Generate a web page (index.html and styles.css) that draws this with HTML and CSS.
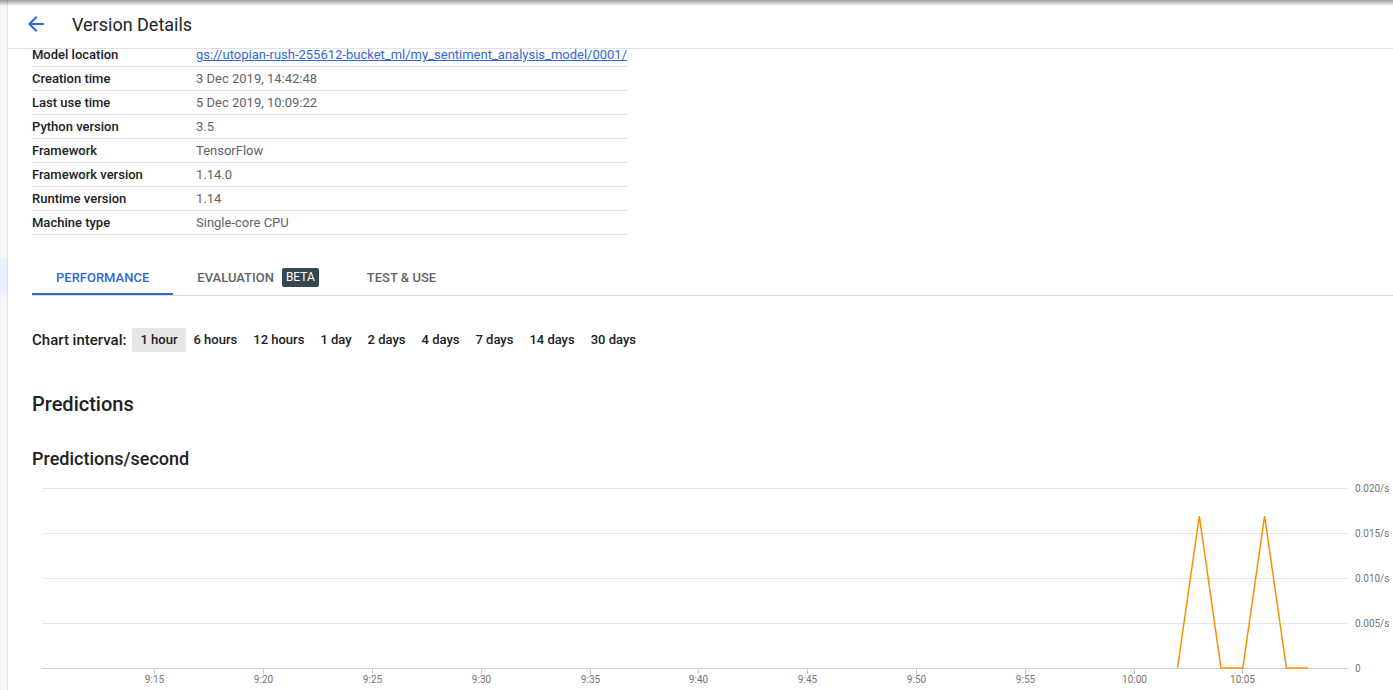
FILE: index.html
```html
<!DOCTYPE html>
<html lang="en">
<head>
<meta charset="utf-8">
<title>Version Details</title>
<link rel="stylesheet" href="styles.css">
</head>
<body>
<div class="top-shadow"></div>
<div class="app">
  <aside class="rail"><div class="rail-item"></div></aside>
  <main class="main">
    <header class="topbar">
      <button class="back" aria-label="Back">
        <svg width="24" height="24" viewBox="0 0 24 24"><path d="M20 11H7.83l5.59-5.59L12 4l-8 8 8 8 1.41-1.41L7.83 13H20v-2z" fill="#3367d6"/></svg>
      </button>
      <h1 class="title">Version Details</h1>
    </header>
    <div class="content">
      <div class="details">
        <div class="row"><span class="label">Model location</span><a class="value link" href="#">gs://utopian-rush-255612-bucket_ml/my_sentiment_analysis_model/0001/</a></div>
        <div class="row"><span class="label">Creation time</span><span class="value">3 Dec 2019, 14:42:48</span></div>
        <div class="row"><span class="label">Last use time</span><span class="value">5 Dec 2019, 10:09:22</span></div>
        <div class="row"><span class="label">Python version</span><span class="value">3.5</span></div>
        <div class="row"><span class="label">Framework</span><span class="value">TensorFlow</span></div>
        <div class="row"><span class="label">Framework version</span><span class="value">1.14.0</span></div>
        <div class="row"><span class="label">Runtime version</span><span class="value">1.14</span></div>
        <div class="row"><span class="label">Machine type</span><span class="value">Single-core CPU</span></div>
      </div>
      <nav class="tabs">
        <div class="tab active">Performance</div>
        <div class="tab">Evaluation<span class="badge">BETA</span></div>
        <div class="tab">Test &amp; Use</div>
      </nav>
      <div class="interval">
        <span class="interval-label">Chart interval:</span>
        <span class="chip selected">1 hour</span>
        <span class="chip">6 hours</span>
        <span class="chip">12 hours</span>
        <span class="chip">1 day</span>
        <span class="chip">2 days</span>
        <span class="chip">4 days</span>
        <span class="chip">7 days</span>
        <span class="chip">14 days</span>
        <span class="chip">30 days</span>
      </div>
      <h2 class="section-title">Predictions</h2>
      <h3 class="chart-title">Predictions/second</h3>
      <svg class="chart" width="1361" height="212" viewBox="0 0 1361 212">
        <g stroke="#e6e6e6" stroke-width="1">
          <line x1="10" y1="10.5" x2="1316" y2="10.5"/>
          <line x1="10" y1="55.5" x2="1316" y2="55.5"/>
          <line x1="10" y1="100.5" x2="1316" y2="100.5"/>
          <line x1="10" y1="145.5" x2="1316" y2="145.5"/>
        </g>
        <line x1="10" y1="190.5" x2="1316" y2="190.5" stroke="#d0d0d0" stroke-width="1"/>
        <g class="ylab">
          <text x="1323" y="13.5">0.020/s</text>
          <text x="1323" y="58.5">0.015/s</text>
          <text x="1323" y="103.5">0.010/s</text>
          <text x="1323" y="148.5">0.005/s</text>
          <text x="1323" y="193.5">0</text>
        </g>
        <g stroke="#c8c8c8" stroke-width="1">
          <line x1="122.5" y1="191" x2="122.5" y2="196"/>
          <line x1="231.5" y1="191" x2="231.5" y2="196"/>
          <line x1="340.5" y1="191" x2="340.5" y2="196"/>
          <line x1="449.5" y1="191" x2="449.5" y2="196"/>
          <line x1="558.5" y1="191" x2="558.5" y2="196"/>
          <line x1="666.5" y1="191" x2="666.5" y2="196"/>
          <line x1="775.5" y1="191" x2="775.5" y2="196"/>
          <line x1="884.5" y1="191" x2="884.5" y2="196"/>
          <line x1="993.5" y1="191" x2="993.5" y2="196"/>
          <line x1="1102.5" y1="191" x2="1102.5" y2="196"/>
          <line x1="1210.5" y1="191" x2="1210.5" y2="196"/>
        </g>
        <g class="xlab">
          <text x="122.5" y="205">9:15</text>
          <text x="231.5" y="205">9:20</text>
          <text x="340.5" y="205">9:25</text>
          <text x="449.5" y="205">9:30</text>
          <text x="558.5" y="205">9:35</text>
          <text x="666.5" y="205">9:40</text>
          <text x="775.5" y="205">9:45</text>
          <text x="884.5" y="205">9:50</text>
          <text x="993.5" y="205">9:55</text>
          <text x="1102.5" y="205">10:00</text>
          <text x="1210.5" y="205">10:05</text>
        </g>
        <polyline points="1145.5,190 1167.3,38 1189,190 1210.8,190 1232.6,38 1254.4,190 1276.1,190" fill="none" stroke="#ff8f00" stroke-width="1.5" stroke-linejoin="miter"/>
      </svg>
    </div>
  </main>
</div>
</body>
</html>
```

FILE: styles.css
```css
* { box-sizing: border-box; }
html, body { margin: 0; padding: 0; }
body {
  font-family: Roboto, "Liberation Sans", Arial, sans-serif;
  color: #202124;
  background: #fff;
  overflow: hidden;
  height: 690px;
}
.top-shadow {
  position: absolute;
  left: 0; top: 0; right: 0;
  height: 6px;
  background: linear-gradient(to bottom, rgba(0,0,0,0.38), rgba(0,0,0,0));
  z-index: 5;
  pointer-events: none;
}
.app {
  display: flex;
  height: 690px;
}
.rail {
  width: 8px;
  flex: 0 0 8px;
  background: #f5f5f5;
  border-right: 1px solid #e0e0e0;
  display: flex;
  flex-direction: column;
}
.rail-item {
  margin-top: 258px;
  height: 37px;
  background: #e8f0fe;
}
.main {
  flex: 1;
  min-width: 0;
  overflow: hidden;
}
.topbar {
  position: relative;
  z-index: 2;
  height: 49px;
  background: #fff;
  border-bottom: 1px solid #e0e0e0;
  display: flex;
  align-items: center;
  padding-left: 16px;
}
.back {
  width: 24px;
  height: 24px;
  padding: 0;
  border: 0;
  background: none;
  display: flex;
}
.title {
  margin: 0 0 0 24px;
  font-size: 18px;
  font-weight: 400;
  color: #202124;
}
.content {
  padding-left: 24px;
}
.details {
  width: 595px;
  margin-top: -6px;
}
.row {
  display: grid;
  grid-template-columns: 164px 1fr;
  align-items: center;
  height: 24px;
  border-bottom: 1px solid #e0e0e0;
  font-size: 13px;
  white-space: nowrap;
}
.label {
  font-weight: 500;
  color: #202124;
}
.value {
  color: #5f6368;
}
.link {
  color: #3367d6;
  text-decoration: underline;
}
.tabs {
  margin-top: 24px;
  display: flex;
  height: 37px;
  border-bottom: 1px solid #dadce0;
}
.tab {
  height: 36px;
  padding: 0 24px;
  display: flex;
  align-items: center;
  font-size: 13px;
  font-weight: 500;
  text-transform: uppercase;
  color: #5f6368;
}
.tab.active {
  color: #3367d6;
  box-shadow: inset 0 -2px 0 #3367d6;
}
.badge {
  margin-left: 8px;
  background: #37474f;
  color: #fff;
  font-size: 12px;
  font-weight: 400;
  line-height: 19px;
  height: 19px;
  padding: 0 4px;
  border-radius: 2px;
}
.interval {
  margin-top: 32px;
  display: flex;
  align-items: center;
  height: 24px;
}
.interval-label {
  font-size: 15px;
  font-weight: 500;
  margin-right: 6px;
}
.chip {
  height: 24px;
  line-height: 24px;
  padding: 0 8px;
  font-size: 13px;
  font-weight: 500;
  color: #202124;
  border-radius: 2px;
}
.chip.selected {
  background: #e6e6e6;
}
.section-title {
  margin: 38px 0 0;
  font-size: 20px;
  line-height: 28px;
  font-weight: 500;
}
.chart-title {
  margin: 29px 0 0;
  font-size: 18px;
  line-height: 24px;
  font-weight: 500;
}
.chart {
  display: block;
  margin-top: 7px;
}
.ylab text {
  font-family: Roboto, "Liberation Sans", Arial, sans-serif;
  font-size: 10px;
  fill: #757575;
}
.xlab text {
  font-family: Roboto, "Liberation Sans", Arial, sans-serif;
  font-size: 10px;
  fill: #757575;
  text-anchor: middle;
}
```
